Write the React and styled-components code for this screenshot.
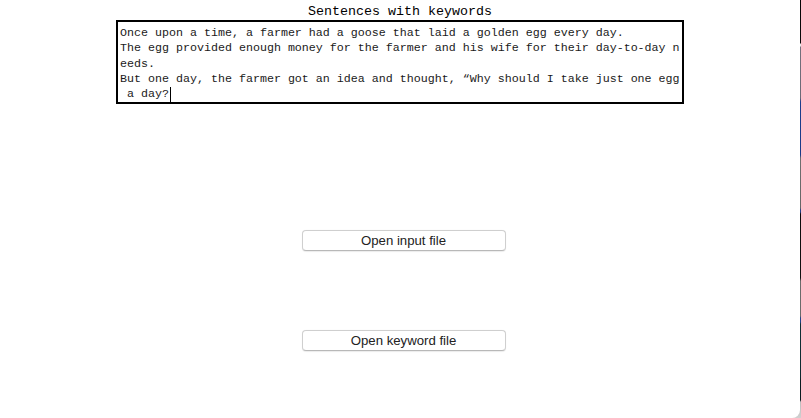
import React from "react";
import styled, { createGlobalStyle } from "styled-components";

const Global = createGlobalStyle`
  html, body {
    margin: 0;
    padding: 0;
    width: 801px;
    height: 418px;
    overflow: hidden;
    background: linear-gradient(
      to bottom,
      #050505 0px, #0a0a0a 43px,
      #e8e8e8 44px, #e8e8e8 46px,
      #74707c 47px, #6c6a76 98px,
      #1d3d8c 102px, #1a3a88 155px,
      #6f6f70 158px, #666 208px,
      #233f88 210px, #233f88 212px,
      #0b0b0c 214px, #111 278px,
      #6b6b6b 281px, #6a6a6a 316px,
      #21428a 318px, #21428a 322px,
      #0f3036 324px, #0d2a30 377px,
      #0a1c20 380px, #0a1c20 400px,
      #bdbdbd 402px, #d0d0d0 418px
    );
  }
  #root { width: 801px; height: 418px; }
`;

const Window = styled.div`
  width: 800px;
  height: 418px;
  background: #ffffff;
  border-bottom-right-radius: 8px;
  display: flex;
  flex-direction: column;
  align-items: center;
  box-sizing: border-box;
`;

const Title = styled.div`
  height: 20px;
  line-height: 23px;
  font-family: "Liberation Mono", "Courier New", monospace;
  font-size: 13.33px;
  color: #000;
`;

const TextBox = styled.div`
  width: 568px;
  height: 84px;
  box-sizing: border-box;
  border: 2px solid #000;
  padding: 4px 2px 0 2px;
  font-family: "Liberation Mono", "DejaVu Sans Mono", monospace;
  font-size: 11.67px;
  line-height: 15.25px;
  color: #1a1a1a;
  white-space: pre;
  overflow: hidden;
`;

const Line = styled.div`
  height: 15.25px;
`;

const Caret = styled.span`
  display: inline-block;
  width: 1px;
  height: 15px;
  background: #000;
  vertical-align: top;
  margin-left: 1px;
`;

const ButtonArea = styled.div`
  display: flex;
  flex-direction: column;
  align-items: center;
  gap: 79px;
  margin-top: 126px;
  padding-left: 7px;
`;

const Button = styled.button`
  width: 204px;
  height: 21px;
  box-sizing: border-box;
  background: #fff;
  border: 1px solid #cfcfcf;
  border-bottom-color: #b8b8b8;
  border-radius: 4px;
  box-shadow: 0 0.5px 1px rgba(0, 0, 0, 0.08);
  font-family: "Liberation Sans", Arial, sans-serif;
  font-size: 13.2px;
  color: #222;
  padding: 0;
  line-height: 19px;
  cursor: default;
`;

const lines = [
  "Once upon a time, a farmer had a goose that laid a golden egg every day.",
  "The egg provided enough money for the farmer and his wife for their day-to-day n",
  "eeds.",
  "But one day, the farmer got an idea and thought, \u201cWhy should I take just one egg",
];

export default function App() {
  return (
    <>
      <Global />
      <Window>
        <Title>Sentences with keywords</Title>
        <TextBox>
          {lines.map((l, i) => (
            <Line key={i}>{l}</Line>
          ))}
          <Line>
            {" a day?"}
            <Caret />
          </Line>
        </TextBox>
        <ButtonArea>
          <Button>Open input file</Button>
          <Button>Open keyword file</Button>
        </ButtonArea>
      </Window>
    </>
  );
}
